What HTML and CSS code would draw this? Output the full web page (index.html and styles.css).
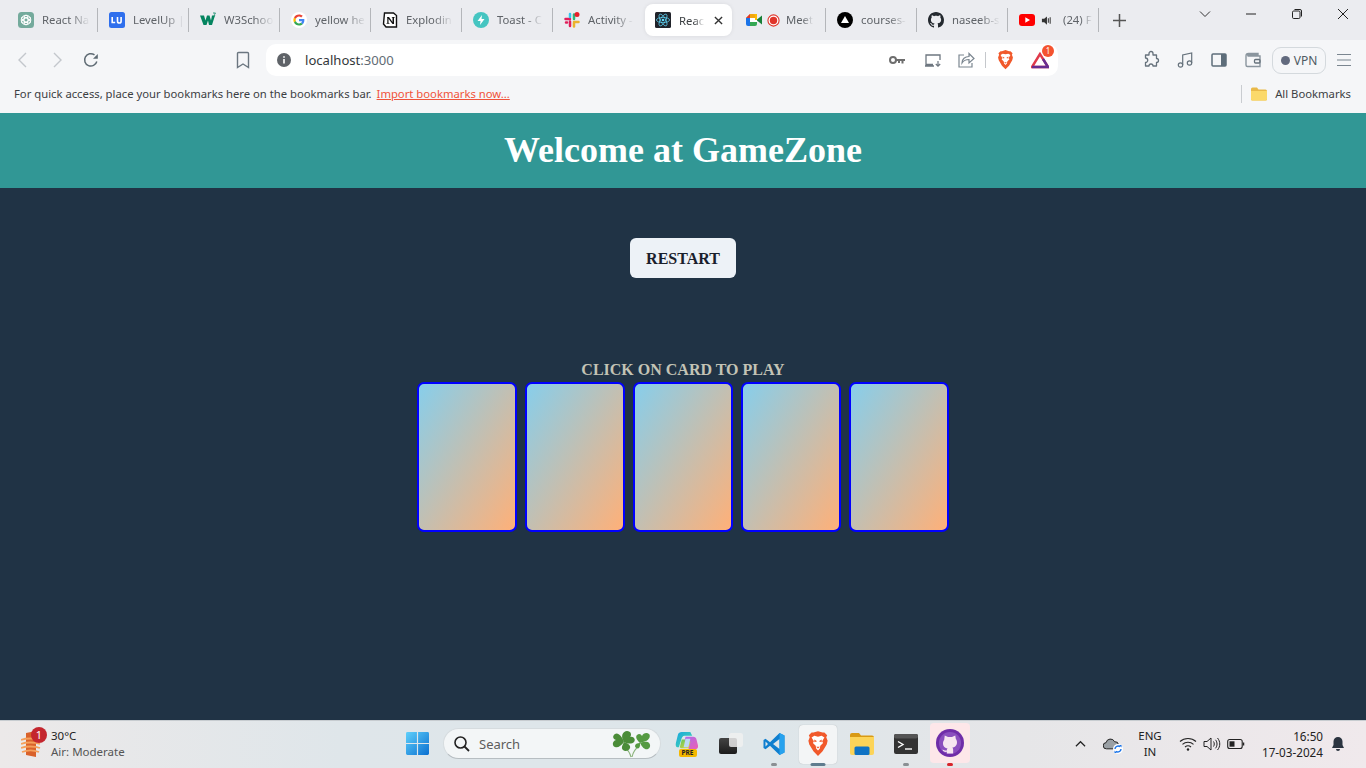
FILE: index.html
```html
<!DOCTYPE html>
<html lang="en">
<head>
<meta charset="utf-8">
<title>React App</title>
<link rel="stylesheet" href="styles.css">
</head>
<body>
<svg class="defs" aria-hidden="true">
  <symbol id="lion" viewBox="0 0 24 28">
    <path fill="#f1592b" d="M12 0l5 1.500 2 0 3 3-1 2 1.500 4-1 4-4.500 7.500-5 5-5-5L2.500 14.500l-1-4L3 6.500l-1-2 3-3 2 0z"/>
    <path fill="#fff" d="M12 6l4-1 3 2-2.500 4 1 2-3 3-.5 3-2 2-2-2-.5-3-3-3 1-2L5 7l3-2z"/>
    <path fill="#f1592b" d="M8 9l3 2-3 1zM16 9l-3 2 3 1zM10 17h4l-2 2z"/>
  </symbol>
  <symbol id="octo" viewBox="0 0 16 16">
    <path d="M8 0C3.580 0 0 3.580 0 8c0 3.540 2.290 6.530 5.470 7.590.4.070.55-.17.55-.38 0-.19-.01-.82-.01-1.490-2.010.37-2.530-.49-2.690-.94-.09-.23-.48-.94-.82-1.130-.28-.15-.68-.52-.01-.53.63-.01 1.080.58 1.230.82.72 1.210 1.870.87 2.330.66.07-.52.28-.87.51-1.070-1.780-.2-3.640-.89-3.640-3.950 0-.87.31-1.590.82-2.150-.08-.2-.36-1.020.08-2.120 0 0 .67-.21 2.200.82.64-.18 1.320-.27 2-.27.68 0 1.360.09 2 .27 1.530-1.040 2.200-.82 2.200-.82.44 1.100.16 1.920.08 2.120.51.56.82 1.270.82 2.150 0 3.070-1.870 3.750-3.650 3.950.29.25.54.73.54 1.480 0 1.070-.01 1.930-.01 2.200 0 .21.15.46.55.38A8.013 8.013 0 0016 8c0-4.420-3.580-8-8-8z"/>
  </symbol>
</svg>

<div class="chrome">
  <div class="tabstrip">
    <div class="tab sep">
      <svg class="fav" viewBox="0 0 16 16"><rect width="16" height="16" rx="3.500" fill="#74aa9c"/><g fill="none" stroke="#fff" stroke-width="1"><circle cx="8" cy="8" r="4.800"/><ellipse cx="8" cy="8" rx="2" ry="4.800"/><ellipse cx="8" cy="8" rx="2" ry="4.800" transform="rotate(60 8 8)"/><ellipse cx="8" cy="8" rx="2" ry="4.800" transform="rotate(120 8 8)"/></g></svg>
      <span class="tab-title">React Na</span>
    </div>
    <div class="tab sep">
      <svg class="fav" viewBox="0 0 16 16"><rect width="16" height="16" rx="2.500" fill="#2f6fed"/><path d="M3.200 5v5.500h3M8.500 5v4.200a1.800 1.800 0 003.600 0V5" fill="none" stroke="#fff" stroke-width="1.600"/></svg>
      <span class="tab-title">LevelUp |</span>
    </div>
    <div class="tab sep">
      <svg class="fav" viewBox="0 0 16 16"><path d="M0 3.500h4l1.500 5 1.500-5h2.500l1.500 5 1-5H15l-3 9.500H9L8 8.500 6.500 13H3.500z" fill="#04845f"/><path d="M13 1h2.500l-1 1.300a1 1 0 01-1 1.700" fill="none" stroke="#04845f" stroke-width=".8"/></svg>
      <span class="tab-title">W3Schoo</span>
    </div>
    <div class="tab sep">
      <svg class="fav" viewBox="0 0 48 48"><circle cx="24" cy="24" r="24" fill="#fff"/><g transform="translate(7.200 7.200) scale(.7)"><path fill="#EA4335" d="M24 9.500c3.540 0 6.710 1.220 9.210 3.600l6.850-6.850C35.900 2.380 30.470 0 24 0 14.620 0 6.510 5.380 2.560 13.220l7.980 6.190C12.430 13.720 17.740 9.500 24 9.500z"/><path fill="#4285F4" d="M46.980 24.550c0-1.570-.15-3.090-.38-4.550H24v9.020h12.940c-.58 2.960-2.260 5.480-4.780 7.180l7.730 6c4.510-4.180 7.090-10.360 7.090-17.650z"/><path fill="#FBBC05" d="M10.530 28.590c-.48-1.450-.76-2.990-.76-4.590s.27-3.140.76-4.590l-7.980-6.190C.92 16.460 0 20.120 0 24c0 3.880.92 7.540 2.560 10.780l7.970-6.190z"/><path fill="#34A853" d="M24 48c6.480 0 11.930-2.130 16.030-5.810l-7.730-6c-2.150 1.450-4.920 2.300-8.300 2.300-6.260 0-11.570-4.220-13.470-9.910l-7.980 6.190C6.510 42.620 14.620 48 24 48z"/></g></svg>
      <span class="tab-title">yellow he</span>
    </div>
    <div class="tab sep">
      <svg class="fav" viewBox="0 0 16 16"><path d="M2.500 1h9l3 2.500V15H4l-2.500-3z" fill="#fff" stroke="#111" stroke-width="1.400"/><path d="M5 5h2l3.500 5V5.800L9.800 5.500V5h3v.5l-.8.3V12h-1.500L6.500 6.800v4l1 .4v.6H4.500v-.6l.8-.4V5.800L5 5.500z" fill="#111"/></svg>
      <span class="tab-title">Explodin</span>
    </div>
    <div class="tab sep">
      <svg class="fav" viewBox="0 0 16 16"><circle cx="8" cy="8" r="8" fill="#45c5c1"/><path d="M9 3L4.500 9h3L7 13l4.500-6h-3z" fill="#fff"/></svg>
      <span class="tab-title">Toast - C</span>
    </div>
    <div class="tab">
      <svg class="fav" viewBox="0 0 16 16"><g stroke-width="2.500" stroke-linecap="round" fill="none"><path d="M1.500 7h4.500" stroke="#e01e5a"/><path d="M6 2v3" stroke="#36c5f0"/><path d="M10 2.500V7" stroke="#2eb67d"/><path d="M10 10h4.500" stroke="#ecb22e"/><path d="M10 11v3.500" stroke="#ecb22e"/><path d="M6 9.500V14M2 10.500h1" stroke="#e01e5a"/></g><circle cx="13" cy="2.500" r="2.500" fill="#e8202a"/></svg>
      <span class="tab-title">Activity -</span>
    </div>
    <div class="tab tab-active">
      <div class="tab-card">
        <svg class="fav" viewBox="0 0 16 16"><rect width="16" height="16" rx="1.500" fill="#20232a"/><g fill="none" stroke="#61dafb" stroke-width=".7"><ellipse cx="8" cy="8" rx="6.600" ry="2.600"/><ellipse cx="8" cy="8" rx="6.600" ry="2.600" transform="rotate(60 8 8)"/><ellipse cx="8" cy="8" rx="6.600" ry="2.600" transform="rotate(120 8 8)"/></g><circle cx="8" cy="8" r="1.300" fill="#61dafb"/></svg>
        <span class="tab-title tab-title-active">Reac</span>
        <svg class="tab-close" viewBox="0 0 10 10"><path d="M1 1l8 8M9 1l-8 8" stroke="#333" stroke-width="1.500" fill="none"/></svg>
      </div>
    </div>
    <div class="tab sep">
      <svg class="fav" viewBox="0 0 16 14"><path d="M4 1h7v4H0z" fill="#f2a60c"/><path d="M4 1L0 5h4z" fill="#e0352b"/><path d="M0 5h4v4H0z" fill="#1a73e8"/><path d="M0 9h4v4H2a2 2 0 01-2-2z" fill="#1a73e8"/><path d="M4 9h7v2a2 2 0 01-2 2H4z" fill="#34a853"/><path d="M4 5h7v4H4z" fill="#fff"/><path d="M11 6.500l5-4v9l-5-4z" fill="#188038"/><path d="M11 1v6H9V3a2 2 0 00-2-2z" fill="#fbbc04"/></svg>
      <svg class="fav rec" viewBox="0 0 14 14"><circle cx="7" cy="7" r="6" fill="#fff" stroke="#e0352b" stroke-width="1.200"/><circle cx="7" cy="7" r="4" fill="#e0352b"/></svg>
      <span class="tab-title">Meet</span>
    </div>
    <div class="tab sep">
      <svg class="fav" viewBox="0 0 16 16"><circle cx="8" cy="8" r="8" fill="#000"/><path d="M8 4l4 7H4z" fill="#fff"/></svg>
      <span class="tab-title">courses-</span>
    </div>
    <div class="tab sep">
      <svg class="fav octo-dark"><use href="#octo"/></svg>
      <span class="tab-title">naseeb-s</span>
    </div>
    <div class="tab sep">
      <svg class="fav" viewBox="0 0 16 12"><rect width="16" height="12" rx="3" fill="#f00"/><path d="M6.300 3.300L11 6l-4.700 2.700z" fill="#fff"/></svg>
      <svg class="fav audio" viewBox="0 0 12 12"><path d="M1 4h2.500L6.500 1.500v9L3.500 8H1z" fill="#333"/><path d="M8 3.500v5M10 2.500v7" stroke="#333" stroke-width="1.100"/></svg>
      <span class="tab-title">(24) F</span>
    </div>
    <svg class="newtab" viewBox="0 0 12 12"><path d="M6 0v12M0 6h12" stroke="#555" stroke-width="1.400"/></svg>
    <div class="winctl">
      <svg class="ctl" viewBox="0 0 12 12"><path d="M1 3.500l5 5 5-5" fill="none" stroke="#333"/></svg>
      <svg class="ctl" viewBox="0 0 12 12"><path d="M1 6h10" stroke="#222"/></svg>
      <svg class="ctl" viewBox="0 0 12 12"><rect x="1.500" y="3" width="7.500" height="7.500" rx="1.200" fill="none" stroke="#222"/><path d="M3.500 1.500h5.500a1.500 1.500 0 011.500 1.500v5.500" fill="none" stroke="#222"/></svg>
      <svg class="ctl" viewBox="0 0 12 12"><path d="M1 1l10 10M11 1L1 11" stroke="#222"/></svg>
    </div>
  </div>

  <div class="toolbar">
    <div class="nav">
      <svg class="tool" viewBox="0 0 20 20"><path d="M13 3l-7 7 7 7" fill="none" stroke="#c3c7cc" stroke-width="1.400"/></svg>
      <svg class="tool" viewBox="0 0 20 20"><path d="M7 3l7 7-7 7" fill="none" stroke="#c3c7cc" stroke-width="1.400"/></svg>
      <svg class="tool" viewBox="0 0 20 20"><path d="M15.800 11.500A6.200 6.200 0 1113.500 4.900" fill="none" stroke="#5f6b74" stroke-width="1.500"/><path d="M12 8.800h4.800V4z" fill="#5f6b74"/></svg>
    </div>
    <svg class="tool bookmark" viewBox="0 0 20 20"><path d="M5.500 2.500h9a1 1 0 011 1V17.500l-5.500-3.500-5.500 3.500V3.500a1 1 0 011-1z" fill="none" stroke="#6b7680" stroke-width="1.400"/></svg>
    <div class="omnibox">
      <svg class="info" viewBox="0 0 14 14"><circle cx="7" cy="7" r="7" fill="#5f6368"/><path d="M6.200 6h1.600v4.500H6.200zM6.200 3.200h1.600v1.600H6.200z" fill="#fff"/></svg>
      <span class="url">localhost<span class="url-port">:3000</span></span>
      <div class="omni-tools">
        <svg class="tool-sm" viewBox="0 0 18 18"><circle cx="5" cy="9" r="3" fill="none" stroke="#6e6e6e" stroke-width="2"/><path d="M8 8h9v2h-1.500v2.500h-2V10H12v2h-2v-2H8z" fill="#6e6e6e"/></svg>
        <svg class="tool-sm" viewBox="0 0 18 18"><path d="M9 13.500H2V4h14v5M1 15h9" fill="none" stroke="#6e7780" stroke-width="1.300"/><path d="M14 10v5M11.800 13l2.200 2.200 2.200-2.200" fill="none" stroke="#6e7780" stroke-width="1.200"/></svg>
        <svg class="tool-sm" viewBox="0 0 18 18"><path d="M7 4H2v12h13v-4M5 12c0-4 3-6.500 7-6.500V2.500l5 5-5 4.500V8.500c-3 0-5.500 1-7 3.500z" fill="none" stroke="#7b8690" stroke-width="1.200"/></svg>
        <span class="omni-sep"></span>
        <svg class="tool-lion"><use href="#lion"/></svg>
        <span class="bat">
          <svg class="tool-sm" viewBox="0 0 18 18"><path d="M9 3L1 16h16z" fill="none" stroke="#e0394a" stroke-width="2.400"/><path d="M1 16h16L12 8" fill="none" stroke="#662d91" stroke-width="2.400"/></svg>
          <span class="bat-badge">1</span>
        </span>
      </div>
    </div>
    <div class="ext-tools">
      <svg class="tool" viewBox="0 0 20 20"><path d="M8 3.500a2 2 0 014 0V5h3.500v3.500a2 2 0 010 4V16H12a2 2 0 00-4 0H4.500v-3.500a2 2 0 000-4.500V5H8z" fill="none" stroke="#66727c" stroke-width="1.300" stroke-linejoin="round"/></svg>
      <svg class="tool" viewBox="0 0 20 20"><circle cx="5.500" cy="15" r="2.200" fill="none" stroke="#66727c" stroke-width="1.200"/><circle cx="14.500" cy="13" r="2.200" fill="none" stroke="#66727c" stroke-width="1.200"/><path d="M7.700 15V5l9-2v10" fill="none" stroke="#66727c" stroke-width="1.200"/></svg>
      <svg class="tool" viewBox="0 0 20 20"><rect x="3" y="4" width="14" height="12" rx="1" fill="none" stroke="#5d6d7a" stroke-width="1.500"/><rect x="12" y="4" width="5" height="12" fill="#5d6d7a"/></svg>
      <svg class="tool" viewBox="0 0 20 20"><path d="M4 5h11v-1.500H5.500A2.500 2.500 0 003 6v9a1.500 1.500 0 001.500 1.500H17V6H4.500" fill="none" stroke="#8a959e" stroke-width="1.400"/><rect x="11.500" y="9.500" width="5.500" height="3.500" rx="1" fill="none" stroke="#66727c" stroke-width="1.300"/></svg>
      <div class="vpn"><span class="vpn-dot"></span>VPN</div>
      <svg class="tool menu" viewBox="0 0 20 20"><path d="M3 4.500h14M3 10h14M3 15.500h14" stroke="#7b8690" stroke-width="1.200"/></svg>
    </div>
  </div>

  <div class="bookmarks">
    <span>For quick access, place your bookmarks here on the bookmarks bar.</span>
    <a class="import" href="#">Import bookmarks now...</a>
    <div class="all-bookmarks">
      <svg class="folder" viewBox="0 0 16 14"><path d="M0 2a1.500 1.500 0 011.500-1.500H6L7.500 2.500H14.500A1.500 1.500 0 0116 4v8a1.500 1.500 0 01-1.500 1.500h-13A1.500 1.500 0 010 12z" fill="#e9b949"/><path d="M0 4h16v8a1.500 1.500 0 01-1.500 1.500h-13A1.500 1.500 0 010 12z" fill="#fbd96a"/></svg>
      <span>All Bookmarks</span>
    </div>
  </div>
</div>

<main class="page">
  <header class="page-header"><h1>Welcome at GameZone</h1></header>
  <div class="game">
    <button class="restart">RESTART</button>
    <p class="hint">CLICK ON CARD TO PLAY</p>
    <div class="cards">
      <div class="card"></div>
      <div class="card"></div>
      <div class="card"></div>
      <div class="card"></div>
      <div class="card"></div>
    </div>
  </div>
</main>

<footer class="taskbar">
  <div class="weather">
    <span class="weather-icon">
      <svg class="haze" viewBox="0 0 20 26"><path d="M5 2l10-2v26l-10-2z" fill="#d9622b"/><path d="M0 9c5-2 14-2 19 0M0 13c5-2 14-2 19 0M0 17c5-2 14-2 19 0M1 21c5-2 12-2 17 0" fill="none" stroke="#f5a05c" stroke-width="1.800"/></svg>
      <span class="weather-badge">1</span>
    </span>
    <div class="weather-text">
      <span class="temp">30°C</span>
      <span class="air">Air: Moderate</span>
    </div>
  </div>
  <div class="center">
    <svg class="start" viewBox="0 0 24 24"><defs><linearGradient id="win" x1="0" y1="0" x2="1" y2="1"><stop offset="0" stop-color="#5fd0fb"/><stop offset="1" stop-color="#0a6fd0"/></linearGradient></defs><path d="M0 1.500A1.500 1.500 0 011.500 0H11.400V11.400H0zM12.600 0H22.500A1.500 1.500 0 0124 1.500V11.400H12.600zM0 12.600H11.400V24H1.500A1.500 1.500 0 010 22.500zM12.600 12.600H24V22.500A1.500 1.500 0 0122.500 24H12.600z" fill="url(#win)"/></svg>
    <div class="search">
      <svg class="search-icon" viewBox="0 0 18 18"><circle cx="7.500" cy="7.500" r="5.500" fill="none" stroke="#222" stroke-width="1.600"/><path d="M11.500 11.500L16 16" stroke="#222" stroke-width="1.800"/></svg>
      <span class="search-label">Search</span>
      <svg class="clover" viewBox="0 0 40 28"><path d="M19 27c-1-4-3-7-6-9M20 27c1-5 4-9 8-12" fill="none" stroke="#8ab27a" stroke-width="1.100"/><g fill="#4a8c38"><path d="M12 12C10 6 6 2 3 4S1 9 4 10c-4 1-4 6-1 7s6-1 9-5z"/><path d="M12 12c-4-6-1-11 3-11s5 4 3 6c4-1 6 3 4 5s-6 2-10 0z"/><path d="M12 12c3 1 7 3 6 6s-5 4-7 2-1-4 1-8z"/></g><g fill="#559a42"><path d="M28 13c-3-3-5-6-3-8s4-1 5 1c1-3 5-4 7-2s0 6-3 7z"/><path d="M28 13c3-1 7-2 9 0s1 5-1 6-5 0-8-6z"/><path d="M28 13c-3 0-5 1-5 3s3 3 4 2 1-3 1-5z"/></g></svg>
    </div>
    <div class="apps">
      <div class="app">
        <span class="copilot">
          <svg class="app-icon" viewBox="0 0 24 22"><defs><linearGradient id="copa" x1="0" y1="0" x2="1" y2="1"><stop offset="0" stop-color="#18a5e0"/><stop offset="1" stop-color="#4adfa8"/></linearGradient><linearGradient id="copb" x1="0" y1="0" x2="1" y2="1"><stop offset="0" stop-color="#a86cf0"/><stop offset="1" stop-color="#ee5fb0"/></linearGradient><linearGradient id="copc" x1="0" y1="0" x2="1" y2="1"><stop offset="0" stop-color="#5bc85c"/><stop offset="1" stop-color="#f1d33a"/></linearGradient></defs><path d="M7 1h9l2 4H10c-2 0-3 2-3.500 4L4 17H2c-1.500-1-1.500-3-1-5l2-8c.5-2 2-3 4-3z" fill="url(#copa)"/><path d="M5 17l2-8h10v9H6z" fill="url(#copc)"/><path d="M11 6h8c2 0 3 1 3.500 3L24 15c.5 3-1 4-3 4h-7l2-7c.3-1-.5-2-2-2h-4z" fill="url(#copb)"/><path d="M11 8h5l-2 9H9z" fill="#bcd9f5"/></svg>
          <span class="pre">PRE</span>
        </span>
      </div>
      <div class="app">
        <span class="layers"><span class="layer-front"></span><span class="layer-back"></span></span>
      </div>
      <div class="app">
        <svg class="app-icon vscode" viewBox="0 0 24 24"><path d="M17.500 1L22.500 3.500V20.500L17.500 23 8 13.800 3.500 17.300 1.500 16V8L3.500 6.700 8 10.200zM17.500 7L11 12l6.500 5zM3.500 9.500v5L6 12z" fill="#0f7fcf"/><path d="M17.500 1L22.500 3.500V20.500L17.500 23z" fill="#27a2ee"/></svg>
        <span class="dot dot-grey"></span>
      </div>
      <div class="app app-tile">
        <svg class="app-lion"><use href="#lion"/></svg>
        <span class="dot dot-wide"></span>
      </div>
      <div class="app">
        <svg class="app-icon folder-app" viewBox="0 0 24 22"><path d="M0 2a2 2 0 012-2h7l2 2.500h11a2 2 0 012 2V7H0z" fill="#d99a14"/><path d="M0 4h24v16a2 2 0 01-2 2H2a2 2 0 01-2-2z" fill="#fcd458"/><rect x="4.500" y="13.500" width="15" height="8.500" rx="1.500" fill="#0f73c4"/></svg>
      </div>
      <div class="app">
        <svg class="app-icon" viewBox="0 0 24 20"><rect width="24" height="20" rx="2" fill="#333"/><rect width="24" height="4.500" rx="2" fill="#555"/><path d="M4 7.500l5 3-5 3" fill="none" stroke="#fff" stroke-width="1.400"/><path d="M11 15h7" stroke="#fff" stroke-width="1.400"/></svg>
        <span class="dot dot-grey"></span>
      </div>
      <div class="app app-tile app-tile-pink">
        <svg class="gh-mark" viewBox="0 0 24 24"><circle cx="12" cy="12" r="12" fill="#6f2da8"/><circle cx="12" cy="12" r="9.500" fill="#8a4fbe"/><path d="M7.500 5.500l2.800 1.300h3.400l2.800-1.300.5 3c.8 1 1 1.800 1 2.800 0 3-1.800 4.200-4 4.600.5.500.7 1.100.7 1.900V21h-5.400v-1.500c-2 .4-3.200-.3-3.900-2 .9.200 1.500 1 3.900.9 0-.8.200-1.200.7-1.600-2.200-.4-4-1.600-4-4.500 0-1 .2-1.800 1-2.800z" fill="#f6e6f0"/></svg>
        <span class="dot dot-red"></span>
      </div>
    </div>
  </div>
  <div class="tray">
    <svg class="tray-chevron" viewBox="0 0 12 8"><path d="M1 6.500l5-5 5 5" fill="none" stroke="#222" stroke-width="1.300"/></svg>
    <span class="cloud">
      <svg class="cloud-svg" viewBox="0 0 18 14"><path d="M4 13a3.500 3.500 0 01-.5-7A5 5 0 0113 5a4 4 0 011 8z" fill="#9aa0a5" stroke="#222" stroke-width="1.100"/></svg>
      <svg class="sync" viewBox="0 0 10 10"><circle cx="5" cy="5" r="5" fill="#fff"/><path d="M2 5a3 3 0 015-2.200M8 5a3 3 0 01-5 2.200" fill="none" stroke="#1a73e8" stroke-width="1.400"/><path d="M6 1h2.500v2.500zM4 9H1.500V6.500z" fill="#1a73e8"/></svg>
    </span>
    <div class="lang"><span>ENG</span><span>IN</span></div>
    <div class="sys">
      <svg class="sys-icon" viewBox="0 0 18 16"><path d="M1 5.500c4.500-4 11.500-4 16 0M3.500 8.300c3-2.700 8-2.700 11 0M6 11c1.700-1.400 4.300-1.400 6 0" fill="none" stroke="#222" stroke-width="1.100"/><circle cx="9" cy="13.500" r="1.200" fill="#222"/></svg>
      <svg class="sys-icon" viewBox="0 0 18 16"><path d="M1 5.500h3l4-3.500v12l-4-3.500H1z" fill="none" stroke="#222"/><path d="M10.500 5.500c1 1.500 1 3.500 0 5M12.500 3.800c2 2.500 2 6 0 8.500M14.500 2c3 3.500 3 8.500 0 12" fill="none" stroke="#222"/></svg>
      <svg class="sys-icon" viewBox="0 0 18 16"><rect x=".7" y="3.500" width="14.500" height="9" rx="2" fill="none" stroke="#222" stroke-width="1.100"/><rect x="2.500" y="5.300" width="5" height="5.400" fill="#222"/><path d="M16.500 6.500v3" stroke="#222" stroke-width="1.500"/></svg>
    </div>
    <div class="clock"><span>16:50</span><span>17-03-2024</span></div>
    <svg class="bell" viewBox="0 0 16 16"><path d="M8 1a4.500 4.500 0 00-4.500 4.500V9L2 12h12l-1.500-3V5.500A4.500 4.500 0 008 1z" fill="#2b3440"/><path d="M6 13a2 2 0 004 0z" fill="#2b3440"/></svg>
  </div>
</footer>
</body>
</html>
```

FILE: styles.css
```css
* { box-sizing: border-box; }
html, body { margin: 0; padding: 0; }
body {
  width: 1366px;
  height: 768px;
  overflow: hidden;
  display: flex;
  flex-direction: column;
  font-family: "Noto Sans", "Open Sans", sans-serif;
  background: #203345;
}
.defs { width: 0; height: 0; position: absolute; }
svg { display: block; flex: none; }

/* browser chrome */
.chrome { flex: none; height: 113px; display: flex; flex-direction: column; }
.tabstrip {
  height: 40px;
  background: #ebecf0;
  display: flex;
  align-items: center;
  padding-left: 7px;
}
.tab {
  width: 91px;
  height: 24px;
  flex: none;
  display: flex;
  align-items: center;
  gap: 8px;
  padding-left: 11px;
  padding-bottom: 1px;
  font-size: 11.300px;
  color: #5f6368;
}
.tab > .fav { margin-top: 1px; }
.sep { border-right: 1px solid #b4b6ba; }
.fav { width: 16px; height: 16px; flex: none; }
.tab > .rec { width: 13px; height: 13px; margin-left: -3px; margin-right: -2px; }
.tab > .audio { width: 11px; height: 11px; margin-left: -2px; margin-right: 3px; }
.octo-dark { fill: #24292f; }
.tab-title {
  white-space: nowrap;
  -webkit-mask-image: linear-gradient(90deg, #000 60%, rgba(0, 0, 0, .05) 100%);
  mask-image: linear-gradient(90deg, #000 60%, rgba(0, 0, 0, .05) 100%);
}
.tab-active { padding: 0 1px; height: 32px; }
.tab-card {
  width: 87px;
  height: 32px;
  background: #fff;
  border-radius: 8px;
  display: flex;
  align-items: center;
  padding-left: 10px;
  gap: 8px;
  box-shadow: 0 0 4px rgba(0, 0, 0, .08);
}
.tab-title-active { color: #3c4043; }
.tab-close { width: 9px; height: 9px; margin-left: auto; margin-right: 9px; }
.newtab { width: 13px; height: 13px; margin-left: 14px; }
.winctl {
  margin-left: auto;
  align-self: flex-start;
  display: flex;
  height: 28px;
  align-items: center;
}
.ctl { width: 12px; height: 12px; margin-right: 34px; }
.ctl:last-child { margin-right: 17px; }

.toolbar {
  height: 40px;
  background: #f5f6f8;
  display: flex;
  align-items: center;
  padding-left: 13px;
}
.nav { display: flex; gap: 14px; }
.tool { width: 20px; height: 20px; }
.bookmark { margin-left: 132px; }
.omnibox {
  width: 792px;
  height: 32px;
  margin-left: 13px;
  background: #fff;
  border-radius: 10px;
  display: flex;
  align-items: center;
  padding-left: 11px;
  font-size: 13.100px;
}
.info { width: 14px; height: 14px; }
.url { margin-left: 14px; color: #33373b; }
.url-port { color: #5f6b74; }
.omni-tools { margin-left: auto; display: flex; align-items: center; padding-right: 7px; }
.tool-sm { width: 18px; height: 18px; }
.omni-tools > .tool-sm { margin-right: 16px; }
.omni-tools > .tool-sm:nth-child(2) { margin-right: 15px; margin-left: 2px; }
.omni-tools > .tool-sm:nth-child(3) { margin-right: 10px; }
.omni-sep { width: 1px; height: 16px; background: #c5c8cc; margin-right: 11px; }
.tool-lion { width: 17px; height: 20px; margin-right: 17px; }
.bat { display: flex; width: 20px; height: 18px; position: relative; }
.bat-badge {
  position: absolute;
  top: -6px;
  left: 11px;
  width: 12px;
  height: 12px;
  border-radius: 50%;
  background: #f4532f;
  color: #fff;
  font-size: 8px;
  line-height: 12px;
  text-align: center;
}
.ext-tools { display: flex; align-items: center; gap: 14px; margin-left: 83px; }
.vpn {
  width: 54px;
  height: 27px;
  margin-left: -5px;
  margin-right: -6px;
  border: 1px solid #d4d9dd;
  border-radius: 9px;
  display: flex;
  align-items: center;
  justify-content: center;
  gap: 4px;
  font-size: 12px;
  color: #4f5a63;
}
.vpn-dot {
  width: 9px;
  height: 9px;
  border-radius: 50%;
  background: #626a7e;
}

.bookmarks {
  height: 33px;
  background: #f5f6f8;
  display: flex;
  align-items: center;
  padding: 0 15px 6px 14px;
  font-size: 11.280px;
  color: #3c4043;
  white-space: nowrap;
}
.import { margin-left: 5px; color: #f0533a; text-decoration: underline; }
.all-bookmarks {
  margin-left: auto;
  height: 18px;
  border-left: 1px solid #c9ccd0;
  padding-left: 9px;
  display: flex;
  align-items: center;
  gap: 8px;
}
.folder { width: 16px; height: 14px; }

/* app */
.page { flex: 1; min-height: 0; background: #203345; }
.page-header {
  height: 75px;
  padding-bottom: 2px;
  background: #319795;
  display: flex;
  align-items: center;
  justify-content: center;
}
h1 {
  margin: 0;
  color: #fff;
  font: 700 36px/1 "Liberation Serif", "Times New Roman", serif;
}
.game { display: flex; flex-direction: column; align-items: center; padding-top: 50px; }
.restart {
  width: 106px;
  height: 40px;
  padding: 1px 0 0;
  border: 0;
  border-radius: 6px;
  background: #edf2f7;
  color: #1a202c;
  font: 700 16px "Liberation Serif", "Times New Roman", serif;
}
.hint {
  margin: 82px 0 0;
  height: 22px;
  color: #c3c3b5;
  font: 700 16px/20px "Liberation Serif", "Times New Roman", serif;
}
.cards { display: flex; gap: 8px; }
.card {
  width: 100px;
  height: 150px;
  border: 2px solid #0000ff;
  border-radius: 7px;
  background: linear-gradient(to bottom right, #87ceeb, #ffb078);
}

/* taskbar */
.taskbar {
  flex: none;
  height: 48px;
  padding-bottom: 2px;
  display: flex;
  align-items: center;
  border-top: 1px solid #c7ccd0;
  background: linear-gradient(90deg, #ece9e9 0%, #dfe6ea 25%, #dde6ea 55%, #e6e6e8 75%, #f0e9ec 100%);
  font-size: 11.500px;
  color: #222;
}
.weather { width: 406px; display: flex; align-items: center; padding-left: 21px; }
.weather-icon { position: relative; width: 20px; height: 26px; }
.haze { width: 20px; height: 26px; }
.weather-badge {
  position: absolute;
  top: -4px;
  left: 10px;
  width: 16px;
  height: 16px;
  border-radius: 50%;
  background: #c4262e;
  color: #fff;
  font-size: 11px;
  line-height: 16px;
  text-align: center;
}
.weather-text { margin-left: 10px; display: flex; flex-direction: column; line-height: 16px; }
.air { color: #555; }
.center { display: flex; align-items: center; }
.start { width: 23px; height: 23px; }
.search {
  width: 218px;
  height: 31px;
  margin-left: 14px;
  border-radius: 16px;
  background: #f3f6f7;
  border: 1px solid #d6dcdf;
  border-bottom-color: #b7bec2;
  display: flex;
  align-items: center;
  padding-left: 9px;
  font-size: 13px;
}
.search-icon { width: 18px; height: 18px; }
.search-label { margin-left: 8px; color: #5c5c5c; }
.clover { width: 40px; height: 28px; margin-left: auto; margin-right: 8px; }
.apps { display: flex; margin-left: 3px; }
.app {
  width: 44px;
  height: 46px;
  position: relative;
  display: flex;
  align-items: center;
  justify-content: center;
}
.app-icon { width: 24px; height: 24px; }
.copilot { position: relative; display: block; width: 23px; height: 26px; }
.copilot .app-icon { width: 23px; height: 21px; }
.pre {
  position: absolute;
  left: 4px;
  bottom: 0;
  width: 18px;
  height: 8px;
  background: #f5b800;
  border-radius: 2px;
  font-size: 6.500px;
  font-weight: 700;
  line-height: 8px;
  text-align: center;
  color: #222;
}
.layers { position: relative; display: block; width: 22px; height: 22px; }
.layer-back {
  position: absolute;
  right: -2px;
  top: 0;
  width: 14px;
  height: 14px;
  background: rgba(240, 240, 240, .82);
  border-radius: 2px;
}
.layer-front {
  position: absolute;
  left: 0;
  bottom: 1px;
  width: 18px;
  height: 16px;
  background: linear-gradient(180deg, #444, #1c1c1c);
  border-radius: 2px;
}
.app-tile::before {
  content: "";
  position: absolute;
  left: 3px;
  top: 4px;
  width: 38px;
  height: 39px;
  background: #f3f5f6;
  border-radius: 4px;
  box-shadow: 0 0 1px rgba(0, 0, 0, .25);
}
.app-tile-pink::before { left: 2px; top: 2px; width: 40px; height: 40px; background: #fde7e9; box-shadow: none; }
.app-lion { width: 22px; height: 26px; position: relative; }
.folder-app { height: 22px; }
.vscode { width: 24px; height: 24px; }
.dot {
  position: absolute;
  left: 50%;
  bottom: 1px;
  height: 3px;
  border-radius: 2px;
  transform: translateX(-50%);
}
.dot-grey { width: 6px; background: #8a8f93; }
.dot-wide { width: 15px; background: #5f7c8e; }
.dot-red { width: 6px; background: #d7242a; }
.gh-mark { position: relative; width: 28px; height: 28px; margin-top: -2px; }

.tray { margin-left: auto; display: flex; align-items: center; }
.tray-chevron { width: 11px; height: 8px; margin-right: 17px; }
.cloud { position: relative; width: 18px; height: 14px; margin-right: 14px; }
.cloud-svg { width: 16px; height: 13px; }
.sync {
  position: absolute;
  right: -2px;
  bottom: -3px;
  width: 10px;
  height: 10px;
}
.lang { width: 30px; display: flex; flex-direction: column; align-items: center; line-height: 16px; }
.sys { display: flex; align-items: center; gap: 6px; margin-left: 14px; }
.sys-icon { width: 18px; height: 16px; }
.clock { width: 70px; margin-left: 8px; display: flex; flex-direction: column; align-items: flex-end; line-height: 16px; font-size: 11.700px; }
.bell { width: 16px; height: 16px; margin: 0 20px 0 7px; }
```
